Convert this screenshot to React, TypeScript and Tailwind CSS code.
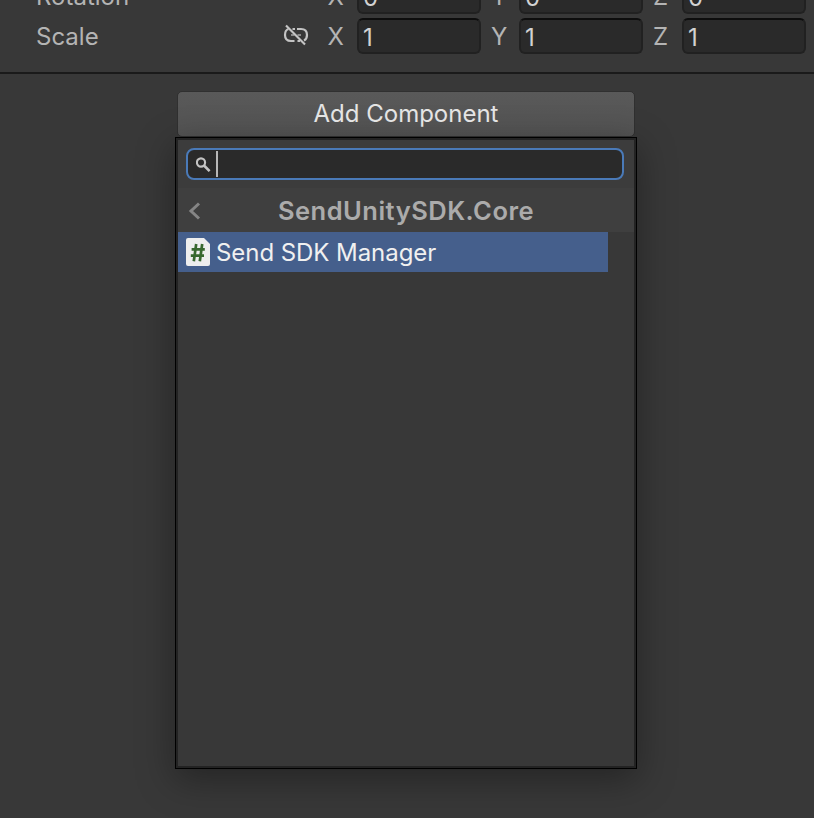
import React from "react";

function NumberField({ value }: { value: string }) {
  return (
    <div className="h-9 w-[124px] shrink-0 rounded-[6px] border-2 border-[#212121] border-t-[#0d0d0d] bg-[#2a2a2a] pl-1 pt-px text-[24px] leading-[34px] text-[#d2d2d2]">
      {value}
    </div>
  );
}

function VectorRow({ label, value, icon }: { label: string; value: string; icon?: React.ReactNode }) {
  return (
    <div className="flex h-9 items-center">
      <div className="w-[247px] shrink-0 pl-9 pt-0.5 leading-9">{label}</div>
      <div className="w-[80.5px] shrink-0 pl-9">{icon}</div>
      <div className="w-[29.5px] shrink-0 pt-0.5 leading-9">X</div>
      <NumberField value={value} />
      <div className="w-[38px] shrink-0 pl-[10px] pt-0.5 leading-9">Y</div>
      <NumberField value={value} />
      <div className="w-[39px] shrink-0 pl-[10px] pt-0.5 leading-9">Z</div>
      <NumberField value={value} />
    </div>
  );
}

function UnlinkIcon() {
  return (
    <svg className="-mt-0.5 block" width="26" height="22" viewBox="0 0 26 22" fill="none" stroke="#c4c4c4" strokeWidth="2.2">
      <path d="M5.5 5Q2 6 2 11Q2 17 8 17H11.5M14.5 17H17M14 5H18Q24 5 24 11Q24 15 21 16.5M9.5 5H12" />
      <path d="M8 11H11.5M14.5 11H18" stroke="#8c8c8c" />
      <path d="M3 1.5L22 20.5" />
    </svg>
  );
}

function Popup() {
  return (
    <div className="ml-[175px] h-[632px] w-[462px] border border-black bg-[#383838] shadow-[0_10px_34px_1px_rgba(0,0,0,0.34)]">
      <div className="h-full border-2 border-[#232323]">
        <div className="h-12 bg-[#3c3c3c] px-2 pt-2">
          <div className="flex h-8 w-[438px] items-center rounded-[8px] border-2 border-[#4a7ab8] bg-[#2a2a2a]">
            <svg className="ml-2 block" width="16" height="16" viewBox="0 0 16 16" fill="none" stroke="#c4c4c4" strokeWidth="2.1">
              <circle cx="5" cy="6.5" r="4.1" />
              <path d="M8 9.5L13.6 15.1" strokeWidth="2.6" />
            </svg>
            <div className="ml-1 h-[26px] w-[2px] bg-[#b8b8b8]" />
          </div>
        </div>
        <div className="flex h-11 items-center bg-[#3f3f3f] text-[#ababab]">
          <svg className="ml-[10px] mt-px block shrink-0" width="14" height="18" viewBox="0 0 14 18" fill="none" stroke="#858585" strokeWidth="3">
            <path d="M11 1.5L3 9L11 16.5" />
          </svg>
          <div className="w-[408px] pt-0.5 text-center text-[25.5px] font-semibold leading-[44px] tracking-[0.5px]">SendUnitySDK.Core</div>
        </div>
        <div className="flex h-10 w-[430px] items-center bg-[#455f8c] pl-2">
          <svg className="block shrink-0" width="24" height="28" viewBox="0 0 24 28">
            <path d="M2 0H18L24 6V26Q24 28 22 28H2Q0 28 0 26V2Q0 0 2 0Z" fill="#eeeeee" />
            <path d="M10.2 6L7.8 23.3M16.2 6L13.8 23.3M5.6 11.4H18.8M4.8 17.6H18" stroke="#38682f" strokeWidth="2.7" fill="none" />
          </svg>
          <div className="ml-[6px] whitespace-nowrap pt-0.5 leading-10 tracking-[-0.06px] text-[#f0f0f0]">Send SDK Manager</div>
        </div>
      </div>
    </div>
  );
}

export default function App() {
  return (
    <div className="h-[818px] w-[814px] overflow-hidden bg-[#383838] font-['Inter',sans-serif] text-[24px] text-[#b4b4b4]">
      <div className="flex h-[72px] flex-col gap-1 overflow-hidden">
        <div className="-mt-[22px]">
          <VectorRow label="Rotation" value="0" />
        </div>
        <VectorRow label="Scale" value="1" icon={<UnlinkIcon />} />
      </div>
      <div className="h-[2px] bg-[#1a1a1a]" />
      <div className="ml-[177px] mt-[17px] h-[46px] w-[458px] rounded-[5px] border border-[#303030] bg-linear-to-b from-[#595959] to-[#535353] text-center leading-[44px] text-[#e4e4e4]">
        Add Component
      </div>
      <Popup />
    </div>
  );
}
